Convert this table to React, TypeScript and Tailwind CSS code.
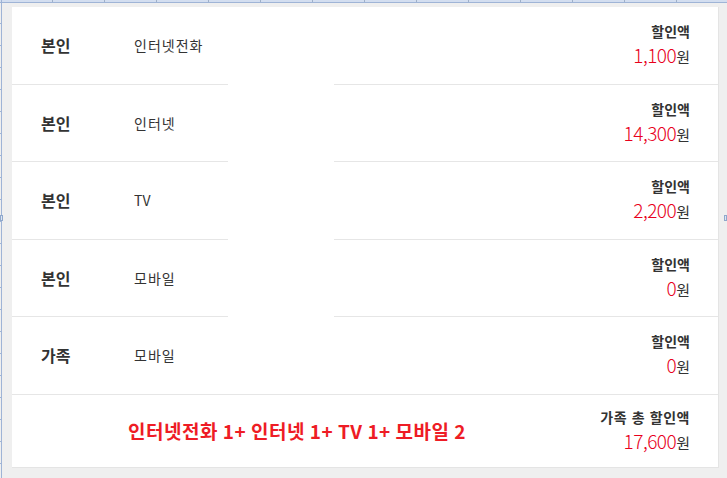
import React from "react";

const rows = [
  { who: "본인", svc: "인터넷전화", label: "할인액", amt: "1,100" },
  { who: "본인", svc: "인터넷", label: "할인액", amt: "14,300" },
  { who: "본인", svc: "TV", label: "할인액", amt: "2,200" },
  { who: "본인", svc: "모바일", label: "할인액", amt: "0" },
  { who: "가족", svc: "모바일", label: "할인액", amt: "0" },
];

const font = { fontFamily: '"Noto Sans CJK KR", "Noto Sans", sans-serif' };

export default function App() {
  const ticks = Array.from({ length: 14 }, (_, i) => i);
  const vticks = Array.from({ length: 22 }, (_, i) => i);
  return (
    <div className="relative w-[727px] h-[478px] bg-[#efefef] overflow-hidden" style={font}>
      {/* top ruler */}
      <div className="absolute left-0 top-0 w-full h-[2px] bg-[#d3def0]" />
      <div className="absolute left-0 top-[2px] w-full h-px bg-[#9fb4d6]" />
      {ticks.map((i) => (
        <div key={i} className="absolute top-0 w-px h-[2px] bg-[#9fb0c8]" style={{ left: 52 + i * 52 }} />
      ))}
      {/* left ruler */}
      <div className="absolute left-[1px] top-0 w-px h-full bg-[#9fb4d6]" />
      {vticks.map((i) => (
        <div key={i} className="absolute left-0 h-px w-[2px] bg-[#9fb4d6]" style={{ top: 23 + i * 22 }} />
      ))}
      <div className="absolute left-0 top-[215px] w-[3px] h-[6px] border border-[#8fa8cc] bg-[#dde6f3]" />
      <div className="absolute right-0 top-[215px] w-[3px] h-[6px] border border-[#8fa8cc] bg-[#dde6f3]" />

      <div className="pt-[7px] pl-[12px]">
        <div className="relative w-[707px] bg-white border-r border-b border-[#e4e4e4]">
          {rows.map((r, i) => (
            <div key={i} className="flex items-center h-[77.5px] border-b border-[#e6e6e6] text-[#333]">
              <div className="w-[122px] pl-[29px] text-[16px] font-bold leading-none">{r.who}</div>
              <div className={r.svc === "TV" ? "flex-1 text-[14px] leading-none" : "flex-1 text-[14px] leading-none tracking-[1px]"}>{r.svc}</div>
              <div className="pr-[28px] flex flex-col items-end">
                <div className="text-[14px] font-bold leading-[20px]">{r.label}</div>
                <div className="leading-[24px] mt-[2px]">
                  <span className="text-[19px] font-light text-[#e8001c] tracking-[-0.5px]">{r.amt}</span>
                  <span className="text-[15px] text-[#333]">원</span>
                </div>
              </div>
            </div>
          ))}
          <div className="flex items-center h-[72px] text-[#333]">
            <div className="flex-1 pl-[116px] text-[19px] font-bold text-[#ee1c25] leading-none tracking-[0.5px]">
              인터넷전화 1+ 인터넷 1+ TV 1+ 모바일 2
            </div>
            <div className="pr-[28px] flex flex-col items-end">
              <div className="text-[14px] font-bold leading-[20px] tracking-[0.5px] [word-spacing:1px]">가족 총 할인액</div>
              <div className="leading-[24px] mt-[2px]">
                <span className="text-[19px] font-light text-[#e8001c] tracking-[-0.5px]">17,600</span>
                <span className="text-[15px] text-[#333]">원</span>
              </div>
            </div>
          </div>
          {/* white overlay gap covering separators */}
          <div className="absolute left-[216px] top-[72px] w-[106px] h-[240px] bg-white" />
        </div>
      </div>
    </div>
  );
}
